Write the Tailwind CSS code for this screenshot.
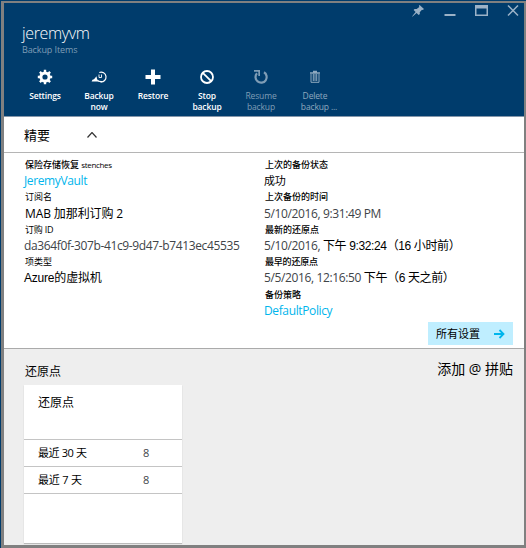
<!DOCTYPE html>
<html lang="zh-CN">
<head>
<meta charset="utf-8">
<title>jeremyvm</title>
<script src="https://cdn.jsdelivr.net/npm/@tailwindcss/browser@4"></script>
</head>
<body class="w-[526px] h-[548px] overflow-hidden bg-[#003c6c] font-['Open_Sans','Noto_Sans_CJK_SC',sans-serif] text-black">
<div class="w-[526px] h-[548px] pt-px pl-px">
<main class="flex h-[547px] w-[525px] flex-col border-t-2 border-l-3 border-r-2 border-b-3 border-[#808080] bg-[#eeeeee] whitespace-nowrap">
  <header class="h-[114px] shrink-0 border-b border-[#8496aa] bg-[#003c6c] text-white">
    <div class="flex h-[20px] justify-end gap-[19px] pr-[5px] pt-[2px] text-[#9bb2c7]">
      <svg class="mr-[1px] h-3 w-3" viewBox="0 0 12 12" fill="currentColor"><path d="M7.6 0 12 4.1 10.8 5 10 4.8 7.7 7.2 7.9 9 6.7 10 4.6 7.9.6 11.6 0 11.5 3.6 6.9 1.6 4.9 2.6 3.9 4.7 4.1 7.3 1.9 6.9.8Z"/></svg>
      <svg class="h-3 w-3" viewBox="0 0 12 12"><path d="M.5 9h11v2H.5Z" fill="currentColor"/></svg>
      <svg class="h-3 w-[13px]" viewBox="0 0 13 12"><path d="M0 0h13v11H0ZM1.5 3.5v6h10v-6Z" fill="currentColor" fill-rule="evenodd"/></svg>
      <svg class="h-3 w-3" viewBox="0 0 12 12"><path d="m1 .5 10 10M11 .5 1 10.500" stroke="currentColor" stroke-width="1.5"/></svg>
    </div>
    <h1 class="h-[22px] pl-[18px] text-[16px] leading-[21px] font-[350] tracking-[-0.35px]">jeremyvm</h1>
    <p class="h-[12px] pl-[18px] text-[9px] leading-[10px] tracking-[-0.1px] text-[#7f9db6]">Backup Items</p>
    <nav class="flex pl-[14px] pt-[12px] text-center text-[8.5px] leading-[11px] font-semibold tracking-[-0.15px]">
      <div class="flex w-[54px] flex-col items-center gap-[5px]">
        <svg class="h-4 w-4" viewBox="0 0 16 16" fill="none" stroke="currentColor"><circle cx="8" cy="8" r="4.100" stroke-width="3"/><path d="M8 .8v3M8 12.200v3M.8 8h3M12.200 8h3M2.900 2.900l2.100 2.100M11 11l2.100 2.100M2.900 13.100 5 11M11 5l2.100-2.100" stroke-width="2.400"/></svg>
        <span>Settings</span>
      </div>
      <div class="flex w-[54px] flex-col items-center gap-[5px]">
        <svg class="h-4 w-4" viewBox="0 0 16 16" fill="none" stroke="currentColor"><path d="M8.300 3.500A4.900 4.900 0 1 1 9.500 12.900" stroke-width="1.200"/><path d="M10.500 5.500v3H8V5.500" stroke-width=".9"/><path d="M.6 12.600 1.500 10.800 3 10.300 5.500 7.300 6.300 11.500 8.500 12.600Z" fill="currentColor" stroke="none"/><path d="M6 10.800Q8 13 11 12.600" stroke-width="1.200"/></svg>
        <span>Backup<br>now</span>
      </div>
      <div class="flex w-[54px] flex-col items-center gap-[5px]">
        <svg class="h-4 w-4" viewBox="0 0 16 16" fill="currentColor"><path d="M6 .5h4v5.500h5.500v4H10v5.500H6V10H.5V6H6Z"/></svg>
        <span>Restore</span>
      </div>
      <div class="flex w-[54px] flex-col items-center gap-[5px]">
        <svg class="h-4 w-4" viewBox="0 0 16 16" fill="none" stroke="currentColor" stroke-width="1.800"><circle cx="8" cy="8" r="6"/><path d="m3.800 3.800 8.400 8.400"/></svg>
        <span>Stop<br>backup</span>
      </div>
      <div class="flex w-[54px] flex-col items-center gap-[5px] font-medium text-[#7f9db6]">
        <svg class="h-4 w-4" viewBox="0 0 16 16" fill="none" stroke="currentColor" stroke-width="2.200"><path d="M11 3.300A5.600 5.600 0 1 1 4 4.300"/><path d="M1 1h6v6H5.300V2.800H1Z" fill="currentColor" stroke="none"/></svg>
        <span>Resume<br>backup</span>
      </div>
      <div class="flex w-[62px] flex-col items-center gap-[5px] font-medium text-[#8fa9bf]">
        <svg class="mr-[8px] h-4 w-4" viewBox="0 0 16 16" fill="none" stroke="currentColor"><path d="M6 2.500h4M3 4h10" stroke-width="1.400"/><path d="M4 5v8.300h8V5M6.300 5v7M8 5v7M9.700 5v7" stroke-width="1"/></svg>
        <span><span class="mr-[8px]">Delete</span><br>backup ...</span>
      </div>
    </nav>
  </header>

  <section class="h-[232px] shrink-0 border-b border-[#aaaaaa] bg-white">
    <div class="flex h-[36px] items-center border-b border-[#b5b5b5] pl-[20px]">
      <h2 class="w-[63px] text-[13px] leading-[20px]">精要</h2>
      <svg class="h-[6px] w-[10px]" viewBox="0 0 10 6" fill="none" stroke="#333" stroke-width="1.200"><path d="m.5 5.500 4.500-5 4.500 5"/></svg>
    </div>
    <div class="flex h-[169px] pl-[20px] pt-[4px] text-[12px] leading-[16.200px] tracking-[-0.37px] text-[#404448]">
      <dl class="w-[240px]">
        <dt class="pl-px text-[9px] font-medium tracking-normal text-black">保险存储恢复 <span class="text-[8px] tracking-[-0.35px]">stenches</span></dt>
        <dd class="text-[#00b5ec]">JeremyVault</dd>
        <dt class="pl-px text-[9px] tracking-normal text-black">订阅名</dt>
        <dd class="pl-px tracking-[-0.1px] text-black">MAB 加那利订购 2</dd>
        <dt class="pl-px text-[9px] tracking-[-0.2px] text-black">订购 ID</dt>
        <dd>da364f0f-307b-41c9-9d47-b7413ec45535</dd>
        <dt class="pl-px text-[9px] tracking-normal text-black">项类型</dt>
        <dd class="font-['Liberation_Sans','Noto_Sans_CJK_SC',sans-serif] tracking-[-0.2px] text-black">Azure的虚拟机</dd>
      </dl>
      <dl>
        <dt class="pl-px text-[9px] font-medium tracking-normal text-black">上次的备份状态</dt>
        <dd class="text-[11px] tracking-[-0.2px] text-black">成功</dd>
        <dt class="pl-px text-[9px] font-medium tracking-normal text-black">上次备份的时间</dt>
        <dd>5/10/2016, 9:31:49 PM</dd>
        <dt class="pl-px text-[9px] font-medium tracking-normal text-black">最新的还原点</dt>
        <dd>5/10/2016, <span class="font-['Liberation_Sans','Noto_Sans_CJK_SC',sans-serif] text-black">下午 9:32:24（16 小时前）</span></dd>
        <dt class="pl-px text-[9px] font-medium tracking-[-0.2px] text-black">最早的还原点</dt>
        <dd>5/5/2016, 12:16:50 <span class="font-['Liberation_Sans','Noto_Sans_CJK_SC',sans-serif] text-black">下午（6 天之前）</span></dd>
        <dt class="pl-px text-[9px] font-medium tracking-normal text-black">备份策略</dt>
        <dd class="text-[#00b5ec]">DefaultPolicy</dd>
      </dl>
    </div>
    <div class="flex justify-end pr-[11px]">
      <button class="flex h-[23px] w-[85px] items-center justify-between bg-[#bfeeff] pl-[8px] pr-[8px] text-[11px] leading-[16px]">所有设置
        <svg class="h-[10px] w-[11px]" viewBox="0 0 11 10" fill="none" stroke="#00b5ec" stroke-width="1.800"><path d="M0 5h9.500M5.500 1l4 4-4 4"/></svg>
      </button>
    </div>
  </section>

  <section class="flex min-h-0 flex-1 justify-between pl-[20px] pr-[11px]">
    <div>
      <h2 class="h-[36px] pt-[13px] pl-px text-[12px] leading-[20px]">还原点</h2>
      <div class="h-[158px] w-[158px] bg-white shadow-[0_1px_1px_#bbb]">
        <h3 class="h-[54px] pl-[14px] pt-[8px] text-[12px] leading-[20px]">还原点</h3>
        <div class="flex h-[27px] items-center border-t border-[#c4c4c4] pl-[14px] text-[11px] tracking-[-0.4px]"><span class="w-[105px]">最近 30 天</span><span class="text-[#404448]">8</span></div>
        <div class="flex h-[27px] items-center border-t border-[#c4c4c4] pl-[14px] text-[11px] tracking-[-0.2px]"><span class="w-[105px]">最近 7 天</span><span class="text-[#404448]">8</span></div>
        <div class="border-t border-[#c4c4c4]"></div>
      </div>
    </div>
    <p class="pt-[10px] text-[14px] leading-[20px]">添加 @ 拼贴</p>
  </section>
</main>
</div>
</body>
</html>
